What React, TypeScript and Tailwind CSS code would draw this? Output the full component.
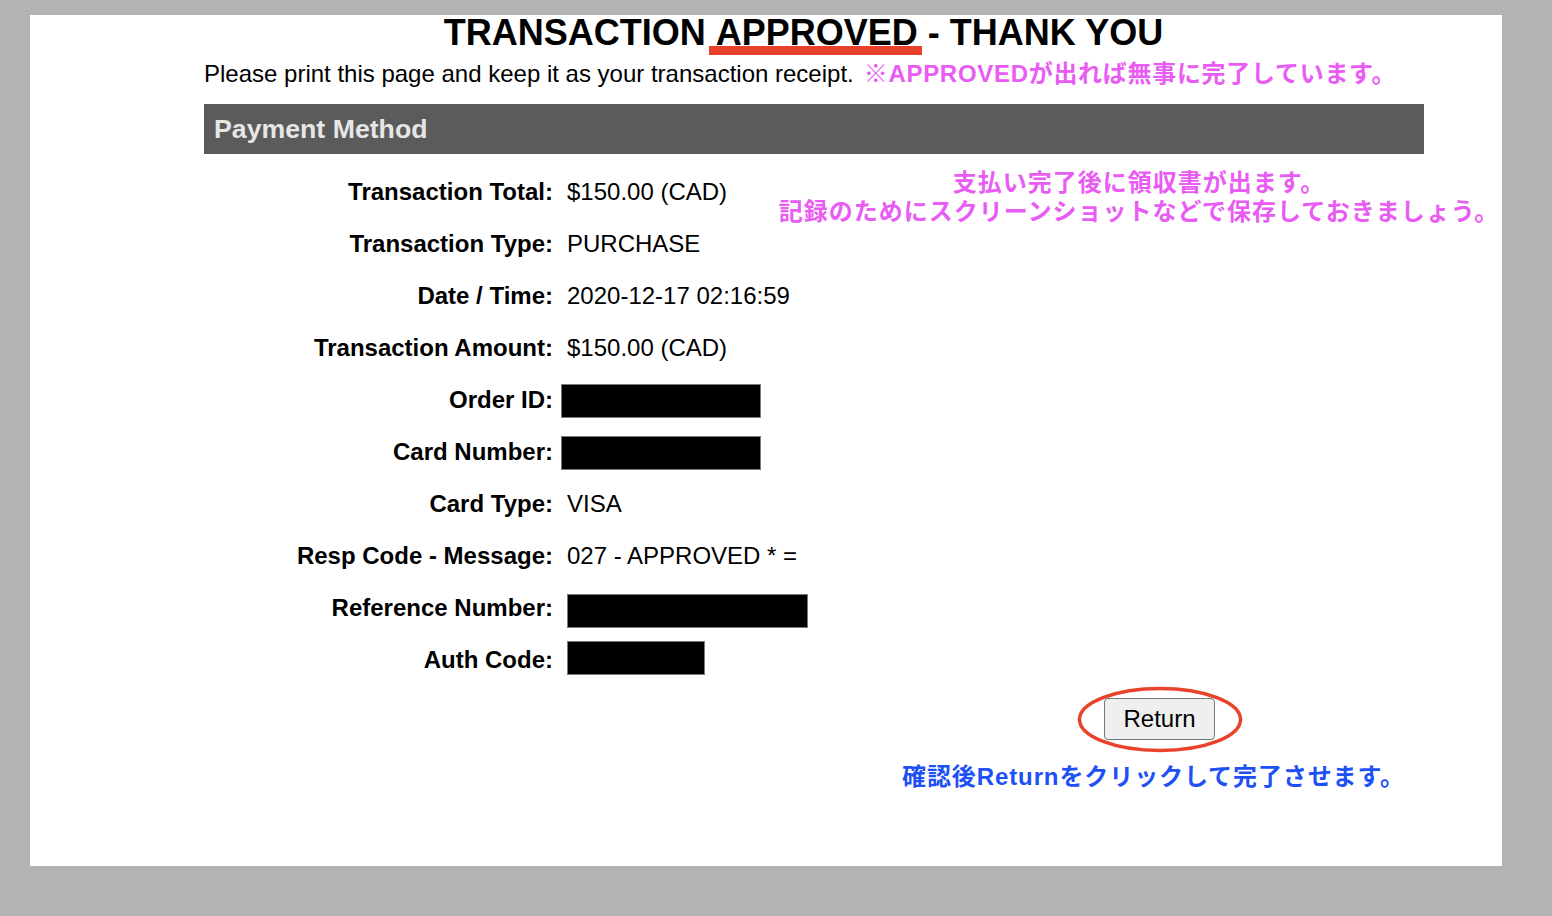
import React from "react";

type Row = { label: string; value?: string; box?: { w: string; cls: string } };

const rows: Row[] = [
  { label: "Transaction Total:", value: "$150.00 (CAD)" },
  { label: "Transaction Type:", value: "PURCHASE" },
  { label: "Date / Time:", value: "2020-12-17 02:16:59" },
  { label: "Transaction Amount:", value: "$150.00 (CAD)" },
  { label: "Order ID:", box: { w: "w-[200px]", cls: "-ml-[6px] mt-[1px]" } },
  { label: "Card Number:", box: { w: "w-[200px]", cls: "-ml-[6px] mt-[1px]" } },
  { label: "Card Type:", value: "VISA" },
  { label: "Resp Code - Message:", value: "027 - APPROVED * =" },
  { label: "Reference Number:", box: { w: "w-[241px]", cls: "mt-[5px]" } },
  { label: "Auth Code:", box: { w: "w-[138px]", cls: "mb-[5px]" } },
];

export default function App() {
  return (
    <div className="h-[916px] w-[1552px] bg-[#b3b3b3] pl-[30px] pt-[15px] font-['Liberation_Sans','Noto_Sans_CJK_JP',sans-serif] text-black">
      <div className="relative h-[851px] w-[1472px] bg-white">
        {/* Heading */}
        <div className="pl-[75px] text-center text-[36px] font-bold leading-[36px]">
          TRANSACTION{" "}
          <span className="relative inline-block">
            APPROVED
            <span className="absolute left-[-7px] right-[-4px] top-[31px] h-[9px] bg-[#e8412b]" />
          </span>{" "}
          - THANK YOU
        </div>

        <div className="pl-[174px]">
          <div className="mt-[9px] flex items-baseline text-[24px] leading-[28px]">
            <span>Please print this page and keep it as your transaction receipt.</span>
            <span className="ml-[10px] font-bold tracking-[0.7px] text-[#e95cf3]">※APPROVEDが出れば無事に完了しています。</span>
          </div>

          <div className="mt-[16px] flex h-[50px] w-[1220px] items-center bg-[#5b5b5b] pl-[10px] text-[26.7px] font-bold text-[#e6e6e6]">
            Payment Method
          </div>

          <div className="mt-[12px] flex flex-col">
            {rows.map((r) => (
              <div key={r.label} className="flex h-[52px] items-center">
                <div className="w-[349px] text-right text-[24px] font-bold">{r.label}</div>
                <div className="ml-[14px] flex items-center text-[24px]">
                  {r.value ? (
                    <span>{r.value}</span>
                  ) : (
                    <span className={`block h-[34px] border border-[#7a7a7a] bg-black ${r.box!.w} ${r.box!.cls}`} />
                  )}
                </div>
              </div>
            ))}
          </div>

          <div className="ml-[900px] mt-[12px]">
            <div className="relative inline-block">
              <button className="h-[42px] w-[111px] rounded-[4px] border border-[#767676] bg-[#efefef] text-[24px] leading-none text-black">
                Return
              </button>
              <svg
                className="pointer-events-none absolute left-[-27px] top-[-12px]"
                width="166"
                height="67"
                viewBox="0 0 166 67"
              >
                <ellipse cx="83" cy="33.5" rx="80.5" ry="31" fill="none" stroke="#e8432a" strokeWidth="3.5" />
              </svg>
            </div>
          </div>

          <div className="ml-[698px] mt-[23px] text-[24px] font-bold leading-[28px] tracking-[0.9px] text-[#1d50f5]">
            確認後Returnをクリックして完了させます。
          </div>
        </div>

        {/* Annotation */}
        <div className="absolute left-[744px] top-[153px] w-[730px] text-center text-[24px] font-bold leading-[29px] tracking-[1px] text-[#e95cf3]">
          <div>支払い完了後に領収書が出ます。</div>
          <div>記録のためにスクリーンショットなどで保存しておきましょう。</div>
        </div>
      </div>
    </div>
  );
}
